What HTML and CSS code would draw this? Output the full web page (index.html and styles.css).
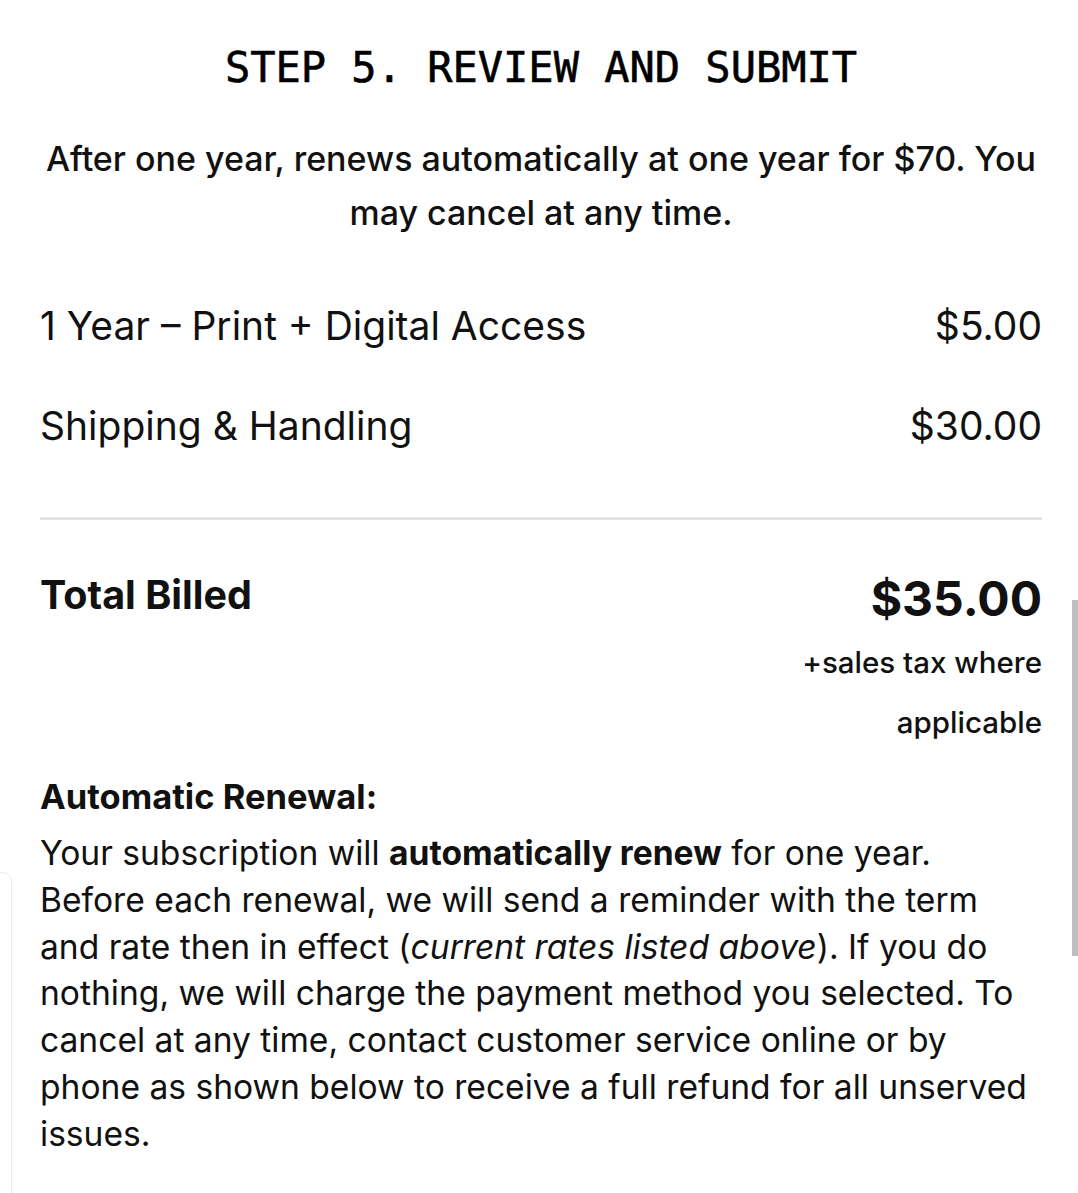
FILE: index.html
```html
<!DOCTYPE html>
<html lang="en">
<head>
<meta charset="utf-8">
<title>Review and Submit</title>
<link rel="stylesheet" href="styles.css">
</head>
<body>
<main class="page">
  <h2 class="step-title">STEP 5. REVIEW AND SUBMIT</h2>
  <p class="renew-note">After one year, renews automatically at one year for $70. You may cancel at any time.</p>
  <div class="line-items">
    <div class="item"><span>1 Year – Print + Digital Access</span><span>$5.00</span></div>
    <div class="item"><span>Shipping &amp; Handling</span><span>$30.00</span></div>
  </div>
  <hr class="divider">
  <div class="total">
    <div class="total-label">Total Billed</div>
    <div class="total-side">
      <div class="total-amount">$35.00</div>
      <div class="tax-note">+sales tax where applicable</div>
    </div>
  </div>
  <section class="auto-renew">
    <h3 class="auto-title">Automatic Renewal:</h3>
    <p class="auto-text">Your subscription will <strong>automatically renew</strong> for one year. Before each renewal, we will send a reminder with the term and rate then in effect (<em>current rates listed above</em>). If you do nothing, we will charge the payment method you selected. To cancel at any time, contact customer service online or by phone as shown below to receive a full refund for all unserved issues.</p>
  </section>
</main>
<div class="side-card"></div>
<div class="scrollbar"></div>
</body>
</html>
```

FILE: styles.css
```css
html, body {
  margin: 0;
  padding: 0;
  background: #ffffff;
}
body {
  font-family: "Inter", "Liberation Sans", sans-serif;
  color: #111111;
  overflow: hidden;
  height: 1193px;
  position: relative;
}
.page {
  padding: 0 36px 0 40px;
}
.step-title {
  margin: 0;
  padding-top: 44px;
  font-family: "DejaVu Sans Mono", "Liberation Mono", monospace;
  font-weight: normal;
  font-size: 42px;
  line-height: 48px;
  text-align: center;
  color: #000;
  -webkit-text-stroke: 0.6px #000;
}
.renew-note {
  margin: 40px 0 0;
  font-size: 34px;
  font-weight: 500;
  line-height: 54px;
  text-align: center;
  color: #111;
}
.line-items {
  margin-top: 63px;
  display: flex;
  flex-direction: column;
  gap: 54px;
}
.item {
  display: flex;
  justify-content: space-between;
  font-size: 39px;
  font-weight: 400;
  line-height: 46px;
}
.divider {
  margin: 68px 0 0;
  border: 0;
  height: 3px;
  background: #e3e3e3;
}
.total {
  margin-top: 45px;
  display: flex;
  justify-content: space-between;
  align-items: flex-start;
}
.total-label {
  font-size: 39.5px;
  font-weight: 700;
  line-height: 60px;
}
.total-side {
  text-align: right;
  width: 280px;
}
.total-amount {
  font-size: 48px;
  font-weight: 700;
  line-height: 67px;
}
.tax-note {
  font-size: 29.5px;
  font-weight: 500;
  line-height: 60px;
}
.auto-renew {
  margin-top: 20px;
}
.auto-title {
  margin: 0;
  font-size: 34.5px;
  font-weight: 700;
  line-height: 50px;
}
.auto-text {
  margin: 8px 0 0;
  font-size: 33.6px;
  font-weight: 400;
  line-height: 46.8px;
}
.auto-text strong {
  font-weight: 700;
}
.side-card {
  position: absolute;
  left: -30px;
  top: 872px;
  width: 40px;
  height: 400px;
  border: 1px solid #ececec;
  border-radius: 10px;
}
.scrollbar {
  position: absolute;
  right: 0;
  top: 600px;
  width: 6px;
  height: 356px;
  background: #bdbdbd;
}
```
